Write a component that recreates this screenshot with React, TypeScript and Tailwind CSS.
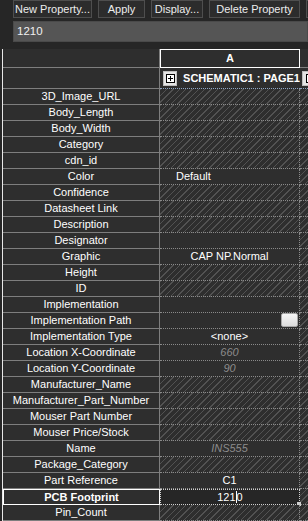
import React from "react";

type Row = {
  label: string;
  value?: string;
  hatched?: boolean;
  align?: "left" | "center";
  muted?: boolean;
  button?: boolean;
  selected?: boolean;
};

const ROWS: Row[] = [
  { label: "3D_Image_URL", hatched: true },
  { label: "Body_Length", hatched: true },
  { label: "Body_Width", hatched: true },
  { label: "Category", hatched: true },
  { label: "cdn_id", hatched: true },
  { label: "Color", value: "Default", align: "left" },
  { label: "Confidence", hatched: true },
  { label: "Datasheet Link", hatched: true },
  { label: "Description", hatched: true },
  { label: "Designator" },
  { label: "Graphic", value: "CAP NP.Normal" },
  { label: "Height", hatched: true },
  { label: "ID", hatched: true },
  { label: "Implementation" },
  { label: "Implementation Path", button: true },
  { label: "Implementation Type", value: "<none>" },
  { label: "Location X-Coordinate", value: "660", muted: true },
  { label: "Location Y-Coordinate", value: "90", muted: true },
  { label: "Manufacturer_Name", hatched: true },
  { label: "Manufacturer_Part_Number", hatched: true },
  { label: "Mouser Part Number", hatched: true },
  { label: "Mouser Price/Stock", hatched: true },
  { label: "Name", value: "INS555", muted: true },
  { label: "Package_Category", hatched: true },
  { label: "Part Reference", value: "C1" },
  { label: "PCB Footprint", value: "1210", selected: true },
  { label: "Pin_Count", hatched: true },
];

const HATCH =
  "bg-[repeating-linear-gradient(135deg,#525252_0px,#525252_1px,#2e2e2e_1px,#2e2e2e_4.5px)]";

function ToolButton({ children, className = "" }: { children?: React.ReactNode; className?: string }) {
  return (
    <div
      className={`h-[18px] shrink-0 flex items-center justify-center border border-[#4e4e4e] bg-[#2c2c2c] text-[#ececec] text-[11px] leading-none ${className}`}
    >
      {children}
    </div>
  );
}

function ExpandBox({ className = "" }: { className?: string }) {
  return (
    <div className={`w-[16px] h-[15px] bg-[#e4e4e4] border border-[#bdbdbd] flex items-center justify-center ${className}`}>
      <div className="relative w-[9px] h-[9px] border border-black bg-white">
        <div className="absolute left-[1px] top-[3px] w-[5px] h-px bg-black" />
        <div className="absolute left-[3px] top-[1px] w-px h-[5px] bg-black" />
      </div>
    </div>
  );
}

function ValueCell({ row }: { row: Row }) {
  if (row.selected) {
    return (
      <div className="relative w-[140px] h-full border border-dotted border-[#cfcfcf] flex items-center justify-center text-white">
        <span>121</span>
        <span className="w-px h-[12px] bg-white" />
        <span>0</span>
        <div className="absolute right-[-2px] bottom-[-2px] w-[4px] h-[4px] bg-[#cfcfcf]" />
      </div>
    );
  }
  return (
    <div
      className={`relative w-[140px] h-full border-r border-b border-dotted border-[#8a8a8a] flex items-center ${
        row.hatched ? HATCH : "bg-[#2e2e2e]"
      } ${row.align === "left" ? "justify-start pl-[16px]" : "justify-center"} ${
        row.muted ? "italic text-[#8c8c8c]" : "text-white"
      }`}
    >
      {row.value}
      {row.button && (
        <div className="absolute right-[1px] top-0 w-[17px] h-[14px] rounded-[2px] border border-[#a8a8a8] bg-[linear-gradient(#f6f6f6,#dcdcdc)]" />
      )}
    </div>
  );
}

export default function App() {
  return (
    <div className="w-[308px] h-[521px] overflow-hidden bg-[#262626] font-['Liberation_Sans',Arial,sans-serif] text-[11px]">
      <div className="flex gap-[6px] pl-[13px]">
        <ToolButton className="w-[79px]">New Property...</ToolButton>
        <ToolButton className="w-[47px]">Apply</ToolButton>
        <ToolButton className="w-[52px]">Display...</ToolButton>
        <ToolButton className="w-[91px]">Delete Property</ToolButton>
        <ToolButton className="w-[20px]" />
      </div>
      <div className="mt-[3px] ml-[13px] h-[21px] bg-[#555555] border border-[#4a4a4a] flex items-center pl-[3px] text-[11.5px] text-[#f0f0f0]">
        1210
      </div>
      <div className="mt-[7px] ml-[2px] border-l border-[#e8e8e8]">
        {/* column header */}
        <div className="flex h-[19px]">
          <div className="w-[157px] border-r border-b border-[#7e7e7e] bg-[#2e2e2e]" />
          <div className="w-[140px] border border-white bg-[#2e2e2e] flex items-center justify-center font-bold text-white">
            A
          </div>
          <div className="flex-1 border-b border-[#7e7e7e] bg-[#2e2e2e]" />
        </div>
        {/* schematic row */}
        <div className="flex h-[21px]">
          <div className="w-[157px] border-r border-b border-[#7e7e7e] bg-[#2e2e2e]" />
          <div className="w-[140px] border-b border-dotted border-[#8fa6c4] bg-[#2e2e2e] flex items-center pl-[3px]">
            <ExpandBox />
            <span className="ml-[6px] font-bold text-white whitespace-nowrap">SCHEMATIC1 : PAGE1</span>
          </div>
          <div className="flex-1 border-b border-dotted border-[#8fa6c4] bg-[#2e2e2e] flex items-center pl-[2px] overflow-hidden">
            <ExpandBox className="shrink-0" />
          </div>
        </div>
        {ROWS.map((row) => (
          <div key={row.label} className="flex h-[16px]">
            {row.selected ? (
              <div className="w-[157px] h-full border border-white bg-[#2e2e2e] flex items-center justify-center font-bold text-white">
                {row.label}
              </div>
            ) : (
              <div className="w-[157px] h-full border-r border-b border-[#7e7e7e] bg-[#2e2e2e] flex items-center justify-center text-white whitespace-nowrap">
                {row.label}
              </div>
            )}
            <ValueCell row={row} />
            <div className={`flex-1 h-full border-b border-dotted border-[#8a8a8a] ${HATCH}`} />
          </div>
        ))}
      </div>
    </div>
  );
}
